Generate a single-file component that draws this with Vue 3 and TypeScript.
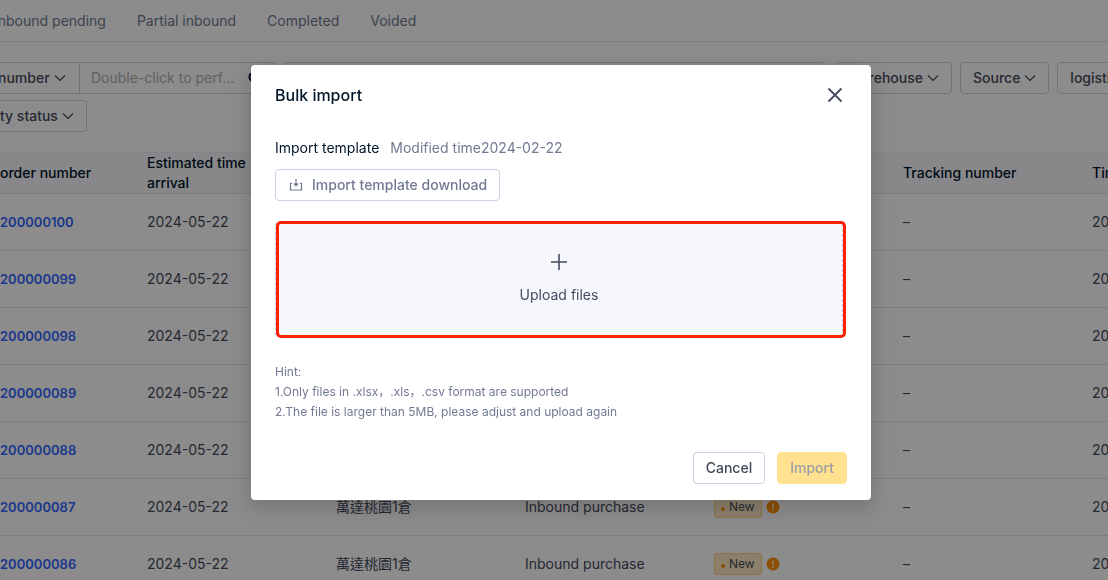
<script setup lang="ts">
interface Order {
  id: string
  arrival: string
  warehouse?: string
  kind?: string
  status?: string
}

const tabs: string[] = ['Inbound pending', 'Partial inbound', 'Completed', 'Voided']

const orders: Order[] = [
  { id: '200000100', arrival: '2024-05-22' },
  { id: '200000099', arrival: '2024-05-22' },
  { id: '200000098', arrival: '2024-05-22' },
  { id: '200000089', arrival: '2024-05-22' },
  { id: '200000088', arrival: '2024-05-22' },
  { id: '200000087', arrival: '2024-05-22', warehouse: '萬達桃園1倉', kind: 'Inbound purchase', status: 'New' },
  { id: '200000086', arrival: '2024-05-22', warehouse: '萬達桃園1倉', kind: 'Inbound purchase', status: 'New' },
]
</script>

<template>
  <div class="page">
    <nav class="tabs">
      <a v-for="tab in tabs" :key="tab" href="#">{{ tab }}</a>
    </nav>

    <section class="filters">
      <div class="row wide">
        <div class="search">
          <button type="button" class="kind">
            number
            <svg class="chev" viewBox="0 0 12 12"><path d="M1 3.5l5 5 5-5" /></svg>
          </button>
          <input type="text" aria-label="Search" placeholder="Double-click to perf..." />
          <svg class="lens" viewBox="0 0 14 14"><circle cx="6" cy="6" r="4.5" /><path d="M9.5 9.5l3.5 3.5" /></svg>
        </div>
        <div class="range"><span></span><span></span></div>
        <button type="button" class="drop">
          Warehouse
          <svg class="chev" viewBox="0 0 12 12"><path d="M1 3.5l5 5 5-5" /></svg>
        </button>
        <button type="button" class="drop">
          Source
          <svg class="chev" viewBox="0 0 12 12"><path d="M1 3.5l5 5 5-5" /></svg>
        </button>
        <button type="button" class="drop">logistics</button>
      </div>
      <div class="row">
        <button type="button" class="drop cut">
          ty status
          <svg class="chev" viewBox="0 0 12 12"><path d="M1 3.5l5 5 5-5" /></svg>
        </button>
      </div>
    </section>

    <table>
      <colgroup>
        <col class="first" />
        <col v-for="n in 6" :key="n" />
      </colgroup>
      <thead>
        <tr>
          <th>order number</th>
          <th>Estimated time<br />arrival</th>
          <th></th>
          <th></th>
          <th></th>
          <th>Tracking number</th>
          <th>Time</th>
        </tr>
      </thead>
      <tbody>
        <tr v-for="order in orders" :key="order.id">
          <td><a href="#">{{ order.id }}</a></td>
          <td>{{ order.arrival }}</td>
          <td>{{ order.warehouse }}</td>
          <td>{{ order.kind }}</td>
          <td>
            <div v-if="order.status" class="status">
              <span class="tag"><i></i>{{ order.status }}</span>
              <svg class="warn" viewBox="0 0 14 14">
                <circle cx="7" cy="7" r="6.5" />
                <path d="M7 3.5v4.5M7 9.3v1.5" />
              </svg>
            </div>
          </td>
          <td>–</td>
          <td>2024</td>
        </tr>
      </tbody>
    </table>
  </div>

  <div class="mask">
    <div class="dialog" role="dialog" aria-modal="true" aria-labelledby="dialog-title">
      <header>
        <h2 id="dialog-title">Bulk import</h2>
        <button type="button" class="close" aria-label="Close">
          <svg viewBox="0 0 16 16"><path d="M1.5 1.5l13 13M14.5 1.5l-13 13" /></svg>
        </button>
      </header>

      <p class="template">
        Import template <span>Modified time2024-02-22</span>
      </p>
      <button type="button" class="btn download">
        <svg viewBox="0 0 14 14">
          <path d="M3 5.5H1.5V12h11V5.5H11M7 1v6" />
          <path class="tip" d="M4 5.5h6L7 8.8z" />
        </svg>
        Import template download
      </button>

      <div class="drop-zone">
        <button type="button" class="upload">
          <svg viewBox="0 0 16 16"><path d="M8 0v16M0 8h16" /></svg>
          Upload files
        </button>
        <div class="frame"></div>
      </div>

      <div class="hint">
        <p>Hint:</p>
        <p>1.Only files in .xlsx，.xls，.csv format are supported</p>
        <p>2.The file is larger than 5MB, please adjust and upload again</p>
      </div>

      <footer>
        <button type="button" class="btn">Cancel</button>
        <button type="button" class="btn primary" disabled>Import</button>
      </footer>
    </div>
  </div>
</template>

<style>
html,
body {
  margin: 0;
  overflow: hidden;
}
</style>

<style scoped>
.page,
.mask {
  font-family: Inter, "Noto Sans CJK TC", sans-serif;
  font-size: 14px;
  line-height: 20px;
  color: #454b5c;
}

.page *,
.mask * {
  box-sizing: border-box;
}

.page {
  height: 100vh;
  overflow: hidden;
  background: #fff;
}

button,
input {
  font: inherit;
  color: inherit;
}

svg {
  flex: none;
  fill: none;
  stroke: currentColor;
}

.tabs {
  display: flex;
  gap: 31px;
  height: 42px;
  align-items: center;
  border-bottom: 1px solid #e4e6ee;
  margin-left: -6px;
}

.tabs a {
  color: #717a92;
  text-decoration: none;
  white-space: nowrap;
}

.filters {
  display: flex;
  flex-direction: column;
  gap: 6px;
  padding: 20px 0;
}

.row {
  display: flex;
  gap: 8px;
}

.wide {
  margin-right: -31px;
}

.search {
  display: flex;
  flex: none;
  align-items: center;
  width: 276px;
  height: 32px;
  padding-right: 13px;
  border: 1px solid #ccd2e3;
  border-left: 0;
  border-radius: 0 4px 4px 0;
}

.kind {
  display: flex;
  align-items: center;
  gap: 4px;
  width: 82px;
  height: 30px;
  padding: 0;
  border: 0;
  border-right: 1px solid #ccd2e3;
  background: none;
  font-weight: 500;
  margin-left: -2px;
  flex: none;
}

.search input {
  flex: 1;
  min-width: 0;
  padding: 0 0 0 11px;
  border: 0;
  background: none;
  outline: 0;
}

.search input::placeholder {
  color: #b0b0b0;
  opacity: 1;
}

.chev {
  width: 12px;
  height: 12px;
  stroke-width: 1.2;
}

.lens {
  width: 14px;
  height: 14px;
  color: #001529;
  stroke-width: 2;
}

.range {
  display: flex;
  flex: 1;
  height: 32px;
  border: 1px solid #ccd2e3;
  border-radius: 4px;
}

.range span:first-child {
  width: 152px;
  border-right: 1px solid #ccd2e3;
}

.drop {
  display: flex;
  flex: none;
  align-items: center;
  gap: 4px;
  height: 32px;
  padding: 0 12px;
  border: 1px solid #ccd2e3;
  border-radius: 4px;
  background: #fff;
  font-weight: 500;
}

.cut {
  padding-left: 0;
  border-left: 0;
  border-radius: 0 4px 4px 0;
}

table {
  width: 1269px;
  table-layout: fixed;
  border-collapse: collapse;
}

col {
  width: 189px;
}

col.first {
  width: 135px;
}

th,
td {
  padding: 0 12px;
  text-align: left;
  border-bottom: 1px solid #e6e6ea;
}

th:first-child,
td:first-child {
  padding-left: 0;
}

th {
  height: 41px;
  background: #f7f8fc;
  border-top: 1px solid #eceef5;
  color: #001529;
  font-weight: 500;
}

td {
  height: 57px;
}

td a {
  color: #3366ff;
  font-size: 13px;
  font-weight: 600;
  text-decoration: none;
}

.status {
  display: flex;
  align-items: center;
  gap: 4px;
}

.tag {
  display: flex;
  align-items: center;
  gap: 4px;
  height: 22px;
  padding: 0 6px;
  border: 1px solid #ffd27a;
  border-radius: 3px;
  background: #ffe9c4;
  font-size: 12px;
}

.tag i {
  width: 4px;
  height: 4px;
  margin-top: 4px;
  border-radius: 50%;
  background: #ff8f00;
}

.warn {
  width: 14px;
  height: 14px;
}

.warn circle {
  fill: #ff8f00;
  stroke: none;
}

.warn path {
  stroke: #ffe9c4;
  stroke-width: 1.6;
}

.mask {
  position: fixed;
  inset: 0;
  display: flex;
  justify-content: center;
  align-items: flex-start;
  padding: 65px 0 0 14px;
  background: rgba(0, 0, 0, 0.45);
}

.dialog {
  width: 620px;
  padding: 16px 24px;
  border-radius: 4px;
  background: #fff;
  box-shadow: 0 6px 16px rgba(0, 0, 0, 0.1), 0 9px 28px 8px rgba(0, 0, 0, 0.08);
}

.dialog header {
  display: flex;
  align-items: center;
  justify-content: space-between;
  height: 28px;
}

h2 {
  margin: 0;
  color: #001529;
  font-size: 16px;
  font-weight: 500;
}

.close {
  display: flex;
  padding: 4px;
  border: 0;
  background: none;
}

.close svg {
  width: 16px;
  height: 16px;
  stroke-width: 1.8;
}

.template {
  display: flex;
  gap: 11px;
  margin: 29px 0 11px;
  color: #001529;
}

.template span {
  color: #717a92;
}

.btn {
  display: flex;
  align-items: center;
  justify-content: center;
  height: 32px;
  padding: 0 12px;
  border: 1px solid #ccd2e3;
  border-radius: 4px;
  background: #fff;
  font-weight: 500;
}

.download {
  gap: 9px;
  padding: 0 12px 0 13px;
  color: #717a92;
}

.download svg {
  width: 14px;
  height: 14px;
  stroke-width: 1.2;
}

.download .tip {
  fill: currentColor;
  stroke: none;
}

.drop-zone {
  position: relative;
  margin: 21px 4px 25px 0;
}

.upload {
  display: flex;
  flex-direction: column;
  align-items: center;
  justify-content: center;
  gap: 15px;
  width: 100%;
  height: 115px;
  padding: 0;
  border: 1px dashed #c4c8d4;
  border-radius: 4px;
  background: #f5f7fd;
}

.upload svg {
  width: 16px;
  height: 16px;
  stroke-width: 1.6;
}

.frame {
  position: absolute;
  inset: -1px -3px -1px 1px;
  border: 3px solid #ff2000;
  border-radius: 5px;
  pointer-events: none;
}

.hint {
  color: #717a92;
  font-family: Inter, "Noto Sans CJK SC", sans-serif;
  font-size: 12px;
}

.hint p {
  margin: 0;
}

.dialog footer {
  display: flex;
  justify-content: flex-end;
  gap: 12px;
  margin-top: 30px;
}

.primary {
  border-color: #ffe18f;
  background: #ffe18f;
  color: #9c9fa6;
}
</style>
